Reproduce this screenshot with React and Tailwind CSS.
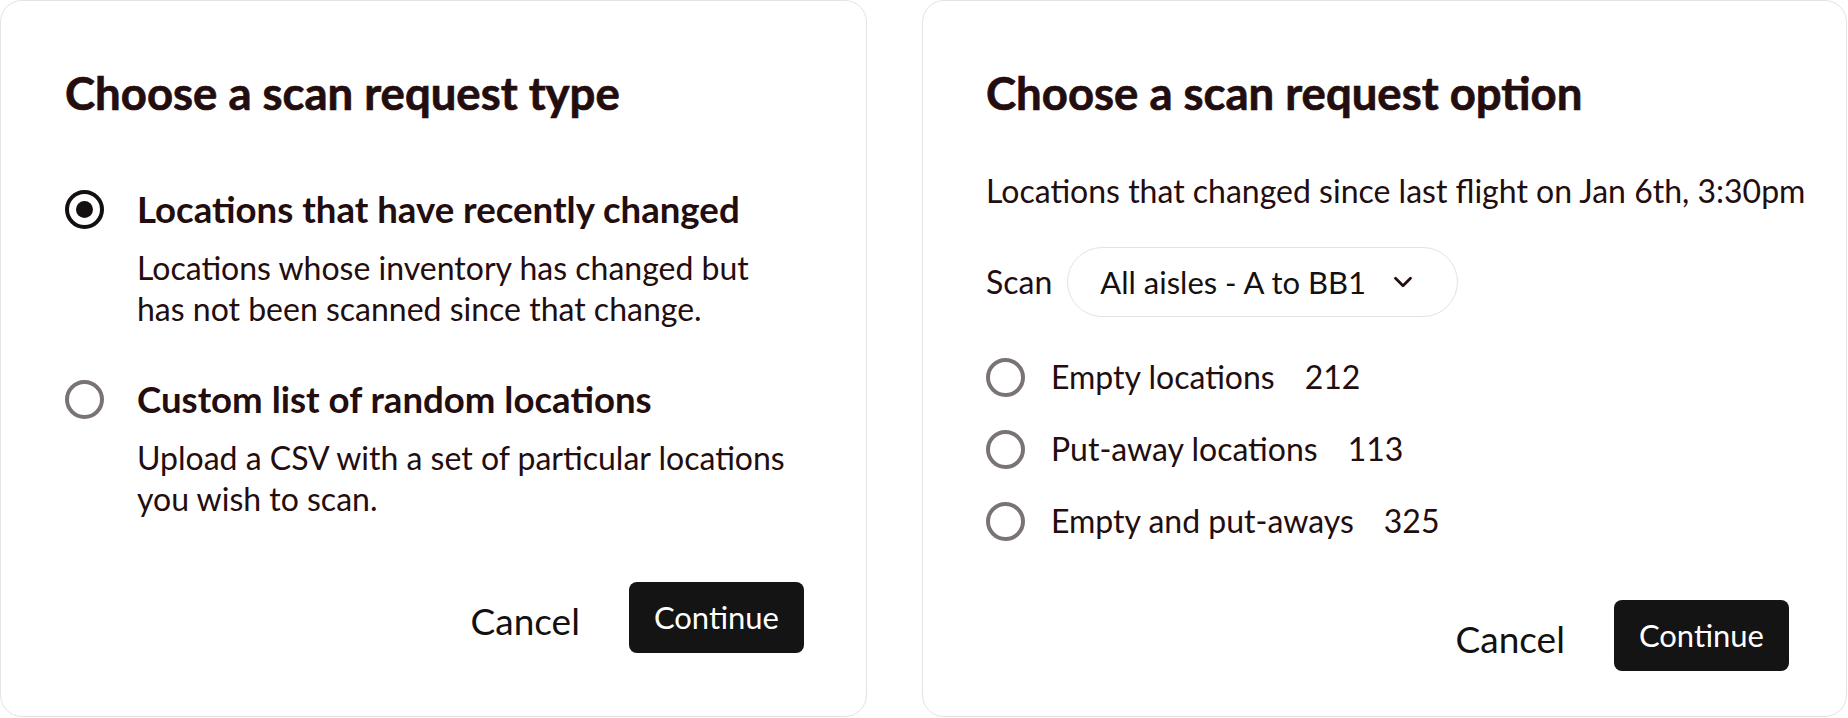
import React, { useState } from "react";
import { ChevronDown } from "lucide-react";

const font = { fontFamily: "Lato, 'Noto Sans', sans-serif" };

const Radio = ({ checked }) => (
  <span
    className={
      "flex shrink-0 items-center justify-center w-[39px] h-[39px] rounded-full border-[4px] " +
      (checked ? "border-[#141010]" : "border-[#7a7373]")
    }
  >
    {checked && <span className="w-[17px] h-[17px] rounded-full bg-[#141010]" />}
  </span>
);

const Buttons = () => (
  <div className="flex items-center justify-end gap-[49px]">
    <button className="text-[37px] leading-none text-[#141010] pt-[5px]">Cancel</button>
    <button className="h-[71px] px-[25px] rounded-[8px] bg-[#141414] text-white text-[31px] leading-none">
      Continue
    </button>
  </div>
);

const TypeCard = () => {
  const [type, setType] = useState("recent");

  const options = [
    {
      id: "recent",
      title: "Locations that have recently changed",
      lines: ["Locations whose inventory has changed but", "has not been scanned since that change."],
    },
    {
      id: "custom",
      title: "Custom list of random locations",
      lines: ["Upload a CSV with a set of particular locations", "you wish to scan."],
    },
  ];

  return (
    <div className="w-[867px] h-[717px] shrink-0 border border-[#e3e3e3] rounded-[22px] pl-[64px] pr-[62px] pt-[64px]">
      <h2 className="text-[45.5px] leading-[56px] font-bold [-webkit-text-stroke:0.7px_#230d0e] text-[#230d0e]">
        Choose a scan request type
      </h2>
      <div className="mt-[68px] flex flex-col gap-[50px]">
        {options.map((o) => (
          <div key={o.id} onClick={() => setType(o.id)} className="cursor-pointer">
            <div className="flex items-center gap-[33px] h-[40px]">
              <Radio checked={type === o.id} />
              <span className="text-[36.6px] leading-[40px] font-bold text-[#230d0e]">{o.title}</span>
            </div>
            <div className="pl-[72px] mt-[18px] text-[32px] leading-[41px] text-[#230d0e]">
              {o.lines.map((l) => (
                <p key={l}>{l}</p>
              ))}
            </div>
          </div>
        ))}
      </div>
      <div className="mt-[63px]">
        <Buttons />
      </div>
    </div>
  );
};

const OptionCard = () => {
  const [pick, setPick] = useState(null);

  const options = [
    { id: "empty", label: "Empty locations", count: 212 },
    { id: "putaway", label: "Put-away locations", count: 113 },
    { id: "both", label: "Empty and put-aways", count: 325 },
  ];

  return (
    <div className="w-[925px] h-[717px] shrink-0 border border-[#e3e3e3] rounded-[22px] pl-[63px] pr-[57px] pt-[64px]">
      <h2 className="text-[45.5px] leading-[56px] font-bold [-webkit-text-stroke:0.7px_#230d0e] text-[#230d0e]">
        Choose a scan request option
      </h2>
      <p className="mt-[50px] text-[32px] leading-[40px] text-[#230d0e] whitespace-nowrap">
        Locations that changed since last flight on Jan 6th, 3:30pm
      </p>
      <div className="mt-[36px] flex items-center gap-[15px]">
        <span className="text-[32px] leading-[40px] text-[#230d0e]">Scan</span>
        <button className="h-[70px] pl-[32px] pr-[39px] rounded-full border border-[#e3e3e3] flex items-center gap-[22px] text-[31px] text-[#141010]">
          All aisles - A to BB1
          <ChevronDown size={30} strokeWidth={2.2} className="text-[#230d0e]" />
        </button>
      </div>
      <div className="mt-[40px] flex flex-col gap-[32px]">
        {options.map((o) => (
          <label key={o.id} onClick={() => setPick(o.id)} className="flex items-center gap-[26px] h-[40px] cursor-pointer">
            <Radio checked={pick === o.id} />
            <span className="text-[32px] leading-[40px] text-[#230d0e]">
              {o.label}
              <span className="ml-[30px]">{o.count}</span>
            </span>
          </label>
        ))}
      </div>
      <div className="mt-[59px]">
        <Buttons />
      </div>
    </div>
  );
};

export default function App() {
  return (
    <div className="w-[1848px] h-[718px] bg-white flex gap-[55px]" style={font}>
      <TypeCard />
      <OptionCard />
    </div>
  );
}
